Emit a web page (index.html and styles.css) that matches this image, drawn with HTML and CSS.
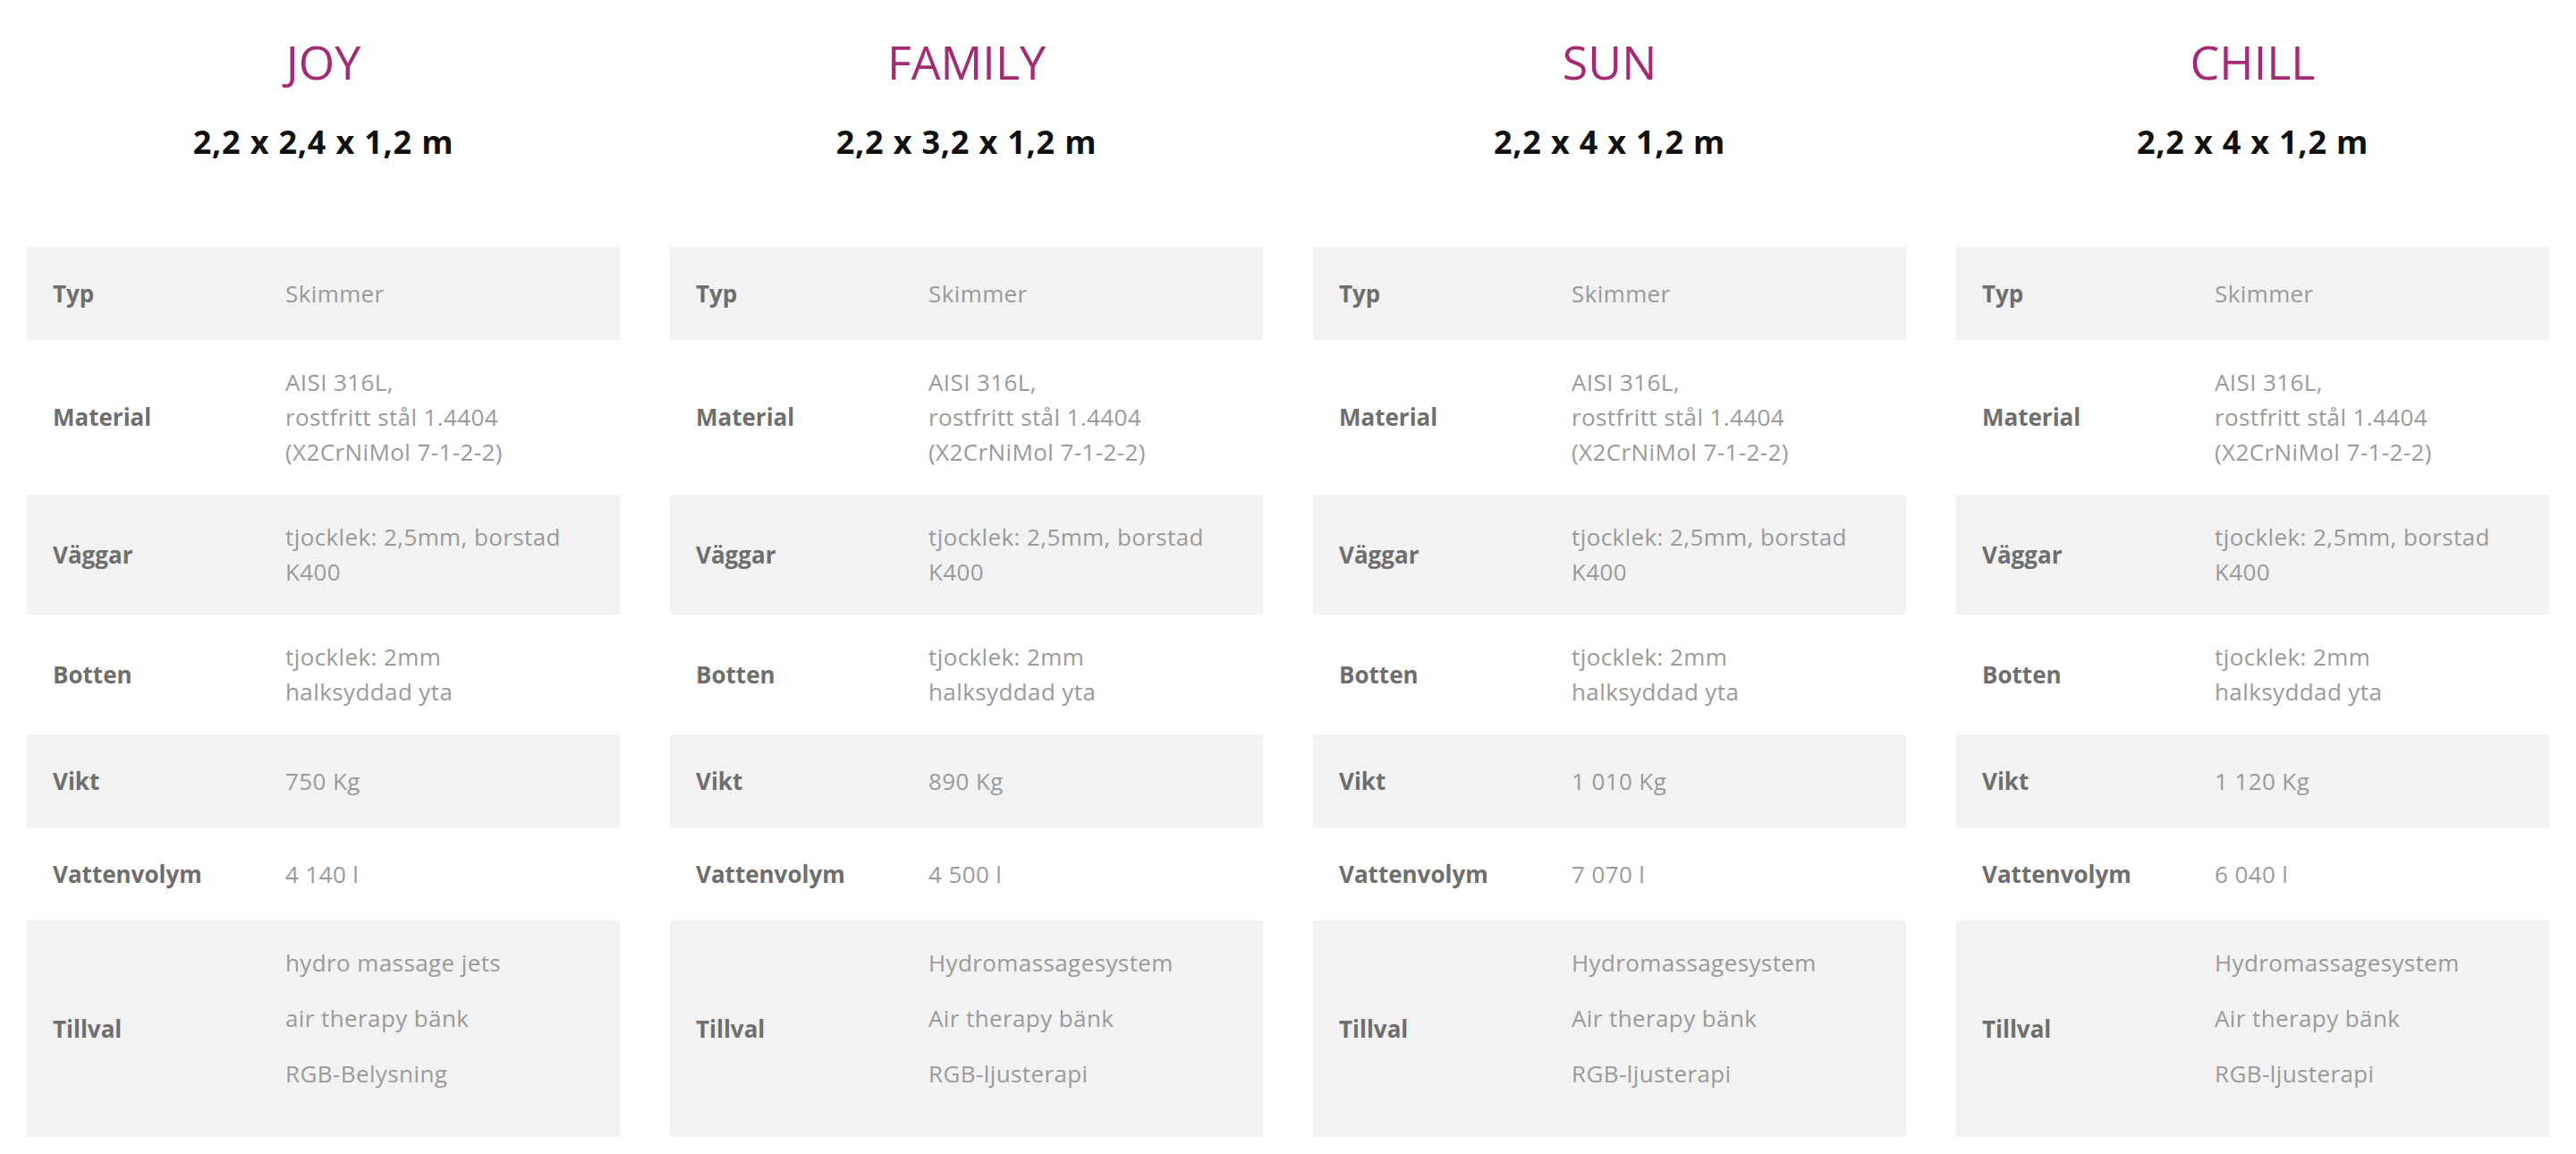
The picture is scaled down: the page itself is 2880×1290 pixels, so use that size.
FILE: index.html
```html
<!DOCTYPE html>
<html lang="sv">
<head>
<meta charset="utf-8">
<title>Modeller</title>
<link rel="stylesheet" href="styles.css">
</head>
<body>
<main class="models">
  <section class="model">
    <h2 class="model-name">JOY</h2>
    <p class="model-size">2,2 x 2,4 x 1,2 m</p>
    <table class="specs">
      <colgroup><col class="c-label"><col></colgroup>
      <tr><th>Typ</th><td>Skimmer</td></tr>
      <tr><th>Material</th><td>AISI 316L,<br>rostfritt stål 1.4404<br>(X2CrNiMol 7-1-2-2)</td></tr>
      <tr><th>Väggar</th><td>tjocklek: 2,5mm, borstad K400</td></tr>
      <tr><th>Botten</th><td>tjocklek: 2mm<br>halksyddad yta</td></tr>
      <tr><th>Vikt</th><td>750 Kg</td></tr>
      <tr><th>Vattenvolym</th><td>4 140 l</td></tr>
      <tr><th>Tillval</th><td><p class="opt">hydro massage jets</p><p class="opt">air therapy bänk</p><p class="opt">RGB-Belysning</p></td></tr>
    </table>
  </section>
  <section class="model">
    <h2 class="model-name">FAMILY</h2>
    <p class="model-size">2,2 x 3,2 x 1,2 m</p>
    <table class="specs">
      <colgroup><col class="c-label"><col></colgroup>
      <tr><th>Typ</th><td>Skimmer</td></tr>
      <tr><th>Material</th><td>AISI 316L,<br>rostfritt stål 1.4404<br>(X2CrNiMol 7-1-2-2)</td></tr>
      <tr><th>Väggar</th><td>tjocklek: 2,5mm, borstad K400</td></tr>
      <tr><th>Botten</th><td>tjocklek: 2mm<br>halksyddad yta</td></tr>
      <tr><th>Vikt</th><td>890 Kg</td></tr>
      <tr><th>Vattenvolym</th><td>4 500 l</td></tr>
      <tr><th>Tillval</th><td><p class="opt">Hydromassagesystem</p><p class="opt">Air therapy bänk</p><p class="opt">RGB-ljusterapi</p></td></tr>
    </table>
  </section>
  <section class="model">
    <h2 class="model-name">SUN</h2>
    <p class="model-size">2,2 x 4 x 1,2 m</p>
    <table class="specs">
      <colgroup><col class="c-label"><col></colgroup>
      <tr><th>Typ</th><td>Skimmer</td></tr>
      <tr><th>Material</th><td>AISI 316L,<br>rostfritt stål 1.4404<br>(X2CrNiMol 7-1-2-2)</td></tr>
      <tr><th>Väggar</th><td>tjocklek: 2,5mm, borstad K400</td></tr>
      <tr><th>Botten</th><td>tjocklek: 2mm<br>halksyddad yta</td></tr>
      <tr><th>Vikt</th><td>1 010 Kg</td></tr>
      <tr><th>Vattenvolym</th><td>7 070 l</td></tr>
      <tr><th>Tillval</th><td><p class="opt">Hydromassagesystem</p><p class="opt">Air therapy bänk</p><p class="opt">RGB-ljusterapi</p></td></tr>
    </table>
  </section>
  <section class="model">
    <h2 class="model-name">CHILL</h2>
    <p class="model-size">2,2 x 4 x 1,2 m</p>
    <table class="specs">
      <colgroup><col class="c-label"><col></colgroup>
      <tr><th>Typ</th><td>Skimmer</td></tr>
      <tr><th>Material</th><td>AISI 316L,<br>rostfritt stål 1.4404<br>(X2CrNiMol 7-1-2-2)</td></tr>
      <tr><th>Väggar</th><td>tjocklek: 2,5mm, borstad K400</td></tr>
      <tr><th>Botten</th><td>tjocklek: 2mm<br>halksyddad yta</td></tr>
      <tr><th>Vikt</th><td>1 120 Kg</td></tr>
      <tr><th>Vattenvolym</th><td>6 040 l</td></tr>
      <tr><th>Tillval</th><td><p class="opt">Hydromassagesystem</p><p class="opt">Air therapy bänk</p><p class="opt">RGB-ljusterapi</p></td></tr>
    </table>
  </section>
</main>
</body>
</html>
```

FILE: styles.css
```css
html, body {
  margin: 0;
  padding: 0;
  background: #ffffff;
}

body {
  font-family: "Open Sans", "Noto Sans", sans-serif;
}

.models {
  display: grid;
  grid-template-columns: repeat(4, 1fr);
  column-gap: 56px;
  padding: 37px 30px 0;
}

.model {
  display: flex;
  flex-direction: column;
  min-width: 0;
}

.model-name {
  margin: 0;
  text-align: center;
  font-size: 52px;
  line-height: 64px;
  font-weight: 400;
  color: #a52a74;
}

.model-size {
  margin: 34px 0 0;
  text-align: center;
  font-size: 36px;
  line-height: 48px;
  font-weight: 700;
  letter-spacing: 0.8px;
  color: #111111;
}

.specs {
  margin-top: 93px;
  width: 100%;
  table-layout: fixed;
  border-collapse: collapse;
  border-spacing: 0;
}

.c-label {
  width: 289px;
}

.specs tr {
  height: 104px;
}

.specs tr:nth-of-type(odd) {
  background: #f2f2f2;
}

.specs tr:nth-of-type(even) {
  background: #ffffff;
}

.specs th,
.specs td {
  vertical-align: middle;
  padding: 28px 10px 28px 0;
  font-size: 26px;
  line-height: 39px;
  text-align: left;
}

.specs th {
  padding-left: 29px;
  font-weight: 700;
  color: #6e6e6e;
}

.specs td {
  font-weight: 400;
  color: #9a9a9a;
  letter-spacing: 0.4px;
}

.opt {
  margin: 0 0 23px;
}
```
